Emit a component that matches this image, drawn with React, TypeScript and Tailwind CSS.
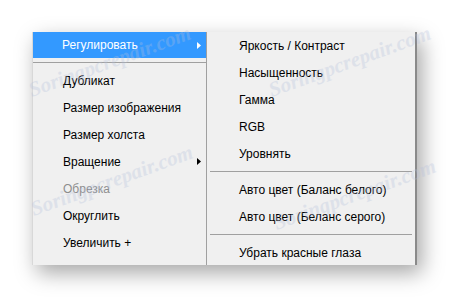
const font = { fontFamily: '"Liberation Sans", Arial, sans-serif' };

type Item = { label: string; arrow?: boolean; disabled?: boolean } | "sep";

const leftItems: Item[] = [
  "sep",
  { label: "Дубликат" },
  { label: "Размер изображения" },
  { label: "Размер холста" },
  { label: "Вращение", arrow: true },
  { label: "Обрезка", disabled: true },
  { label: "Округлить" },
  { label: "Увеличить +" },
  { label: "Уменьшить -" },
];

const rightItems: Item[] = [
  { label: "Яркость / Контраст" },
  { label: "Насыщенность" },
  { label: "Гамма" },
  { label: "RGB" },
  { label: "Уровнять" },
  "sep",
  { label: "Авто цвет (Баланс белого)" },
  { label: "Авто цвет (Беланс серого)" },
  "sep",
  { label: "Убрать красные глаза" },
];

const Arrow = ({ white }: { white?: boolean }) => (
  <svg width="4" height="7" viewBox="0 0 4 7" className="shrink-0">
    <path d="M0 0 L4 3.5 L0 7 Z" fill={white ? "#ffffff" : "#000000"} />
  </svg>
);

// faint diagonal watermark from the source screenshot
const Watermark = ({ x, y }: { x: number; y: number }) => (
  <span
    className="pointer-events-none absolute whitespace-nowrap text-[21px] font-bold italic text-[#b4c0dc] opacity-30"
    style={{
      left: x,
      top: y,
      transform: "translate(-50%, -50%) rotate(-20deg)",
      fontFamily: '"Liberation Serif", serif',
    }}
  >
    Soringpcrepair.com
  </span>
);

const Row = ({ item }: { item: Exclude<Item, "sep"> }) => (
  <div className="flex h-[27px] shrink-0 items-center justify-between pr-[5px] pl-[30px]">
    <span className={item.disabled ? "text-[#8d8d8d]" : "text-black"}>{item.label}</span>
    {item.arrow && <Arrow />}
  </div>
);

export default function App() {
  return (
    <div className="relative h-[297px] w-[451px] overflow-hidden bg-white text-[12px]" style={font}>
      <div className="flex pt-[32px] pl-[32px]">
        <div className="flex h-[233px] shadow-[5px_8px_20px_rgba(0,0,0,0.35)]">
          {/* main menu */}
          <div className="flex w-[174px] flex-col overflow-hidden border-l border-[#d8d8d8] bg-[#f0f0f0]">
            <div className="flex h-[26px] shrink-0 items-center justify-between bg-[#3399ff] pr-[5px] pl-[29px] text-white">
              <span>Регулировать</span>
              <Arrow white />
            </div>
            {leftItems.map((item, i) =>
              item === "sep" ? (
                <div key={i} className="my-[4px] h-px shrink-0 bg-[#a0a0a0]" />
              ) : (
                <Row key={i} item={item} />
              )
            )}
          </div>

          {/* submenu */}
          <div className="flex w-[211px] flex-col border-l border-r-2 border-[#a0a0a0] border-r-[#8a8a8a] bg-[#f0f0f0] [&>div:not(.sep)]:pl-[32px]">
            {rightItems.map((item, i) =>
              item === "sep" ? (
                <div key={i} className="sep mx-[3px] my-[4px] h-px shrink-0 bg-[#a0a0a0]" />
              ) : (
                <Row key={i} item={item} />
              )
            )}
          </div>
        </div>
      </div>

      <Watermark x={110} y={62} />
      <Watermark x={350} y={62} />
      <Watermark x={112} y={181} />
      <Watermark x={355} y={195} />
    </div>
  );
}
